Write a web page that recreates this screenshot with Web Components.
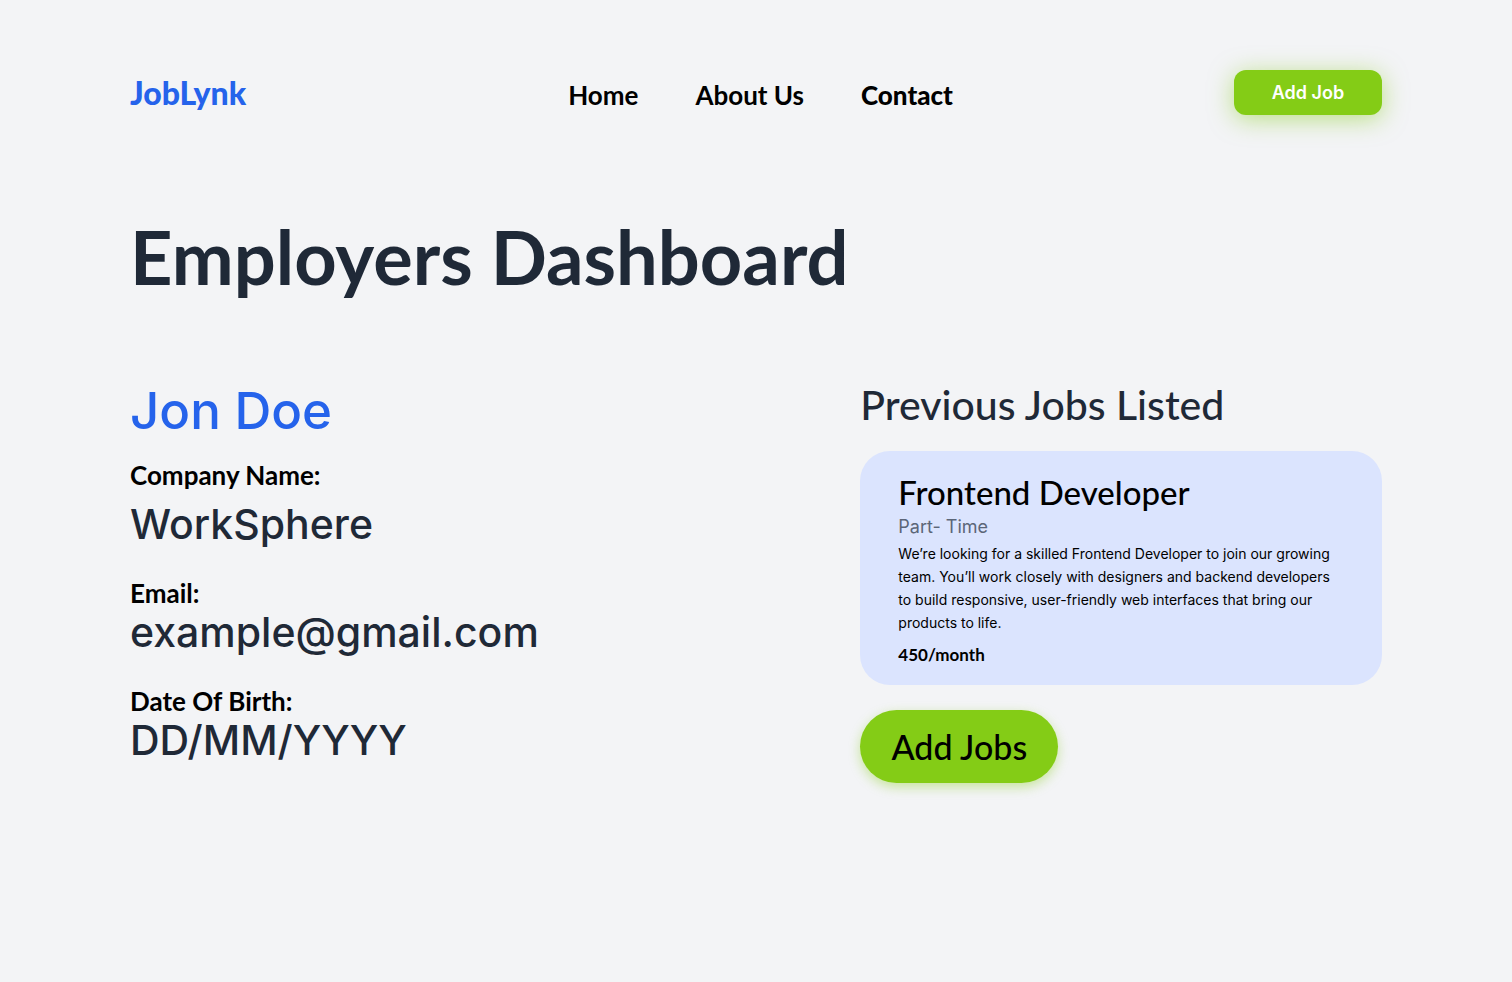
<!DOCTYPE html>
<html lang="en">
<head>
<meta charset="utf-8">
<meta name="viewport" content="width=device-width, initial-scale=1">
<title>JobLynk – Employers Dashboard</title>
<style>
  :root {
    --blue: #2563eb;
    --ink: #1f2937;
    --green: #84cc16;
    --card: #dbe4fe;
    --muted: #5b6678;
    --display: Lato, "Open Sans", sans-serif;
    --body: Inter, Roboto, sans-serif;
  }
  body { margin: 0; background: #f3f4f6; color: #000; font-family: var(--body); }
</style>
</head>
<body>
<employer-dashboard></employer-dashboard>

<script>
const define = (name, html) => {
  const template = document.createElement('template');
  template.innerHTML = html;
  customElements.define(name, class extends HTMLElement {
    constructor() {
      super();
      this.attachShadow({ mode: 'open' }).append(template.content.cloneNode(true));
    }
  });
};

define('action-button', `
  <style>
    :host { display: block; }
    button {
      display: block; border: 0; margin: 0; padding: 0 24px; height: 45px; min-width: 148px;
      border-radius: 12px; background: var(--green); color: #fff; cursor: pointer;
      font: 600 18px/24px var(--body); white-space: nowrap;
      box-shadow: 0 4px 24px rgba(132, 204, 22, .5);
    }
    :host([large]) button {
      height: 73px; min-width: 198px; border-radius: 37px; color: #000;
      font: 500 34px/40px var(--display);
      box-shadow: 0 4px 12px rgba(132, 204, 22, .4);
    }
  </style>
  <button type="button"><slot></slot></button>`);

define('site-header', `
  <style>
    :host { display: grid; grid-template-columns: 7fr 13fr; align-items: center; }
    a { color: inherit; text-decoration: none; white-space: nowrap; }
    .logo { color: var(--blue); font: 900 32px/45px var(--display); }
    .right { display: flex; justify-content: space-between; align-items: center; }
    nav { display: flex; gap: 57px; padding-top: 4px; font: 700 26px/32px var(--display); }
    .current { font-weight: 900; }
  </style>
  <a class="logo" href="#">JobLynk</a>
  <div class="right">
    <nav aria-label="Main">
      <a href="#home">Home</a>
      <a href="#about">About Us</a>
      <a class="current" href="#contact">Contact</a>
    </nav>
    <action-button>Add Job</action-button>
  </div>`);

define('profile-field', `
  <style>
    :host { display: flex; flex-direction: column; }
    :host([roomy]) { gap: 10px; }
    .label { font: 700 26px/32px var(--display); }
    .value { font: 500 41px/46px var(--body); color: var(--ink); }
  </style>
  <div class="label"><slot name="label"></slot></div>
  <div class="value"><slot></slot></div>`);

define('employer-profile', `
  <style>
    :host { display: block; }
    h2 { margin: 0 0 16px; font: 500 51px/64px var(--body); color: var(--blue); }
    .fields { display: flex; flex-direction: column; gap: 30px; }
  </style>
  <h2>Jon Doe</h2>
  <div class="fields">
    <profile-field roomy><span slot="label">Company Name:</span>WorkSphere</profile-field>
    <profile-field><span slot="label">Email:</span>example@gmail.com</profile-field>
    <profile-field><span slot="label">Date Of Birth:</span>DD/MM/YYYY</profile-field>
  </div>`);

define('job-card', `
  <style>
    :host { display: block; padding: 21px 40px 18px 38px; border-radius: 30px; background: var(--card); }
    h3 { margin: 0; font: 500 33px/40px var(--display); }
    .type { font: 400 18px/30px var(--body); color: var(--muted); }
    p { margin: 0 0 9px; font: 400 14px/23px var(--body); }
    .pay { font: 700 17px/24px var(--display); }
  </style>
  <h3><slot name="title"></slot></h3>
  <div class="type"><slot name="type"></slot></div>
  <p><slot></slot></p>
  <div class="pay"><slot name="pay"></slot></div>`);

define('job-list', `
  <style>
    :host { display: block; }
    h2 { margin: 0 0 20px; font: 500 41px/52px var(--display); color: var(--ink); }
    action-button { width: fit-content; margin-top: 25px; }
  </style>
  <h2>Previous Jobs Listed</h2>
  <job-card>
    <span slot="title">Frontend Developer</span>
    <span slot="type">Part- Time</span>
    We’re looking for a skilled Frontend Developer to join our growing team. You’ll work closely with designers and backend developers to build responsive, user-friendly web interfaces that bring our products to life.
    <span slot="pay">450/month</span>
  </job-card>
  <action-button large>Add Jobs</action-button>`);

define('employer-dashboard', `
  <style>
    :host { display: block; padding: 70px 130px; }
    h1 { margin: 100px 0 80px; font: 700 74px/84px var(--display); color: var(--ink); }
    main { display: block; }
    .columns { display: grid; grid-template-columns: 7fr 5fr; align-items: start; }
  </style>
  <site-header></site-header>
  <main>
    <h1>Employers Dashboard</h1>
    <div class="columns">
      <employer-profile></employer-profile>
      <job-list></job-list>
    </div>
  </main>`);
</script>
</body>
</html>
